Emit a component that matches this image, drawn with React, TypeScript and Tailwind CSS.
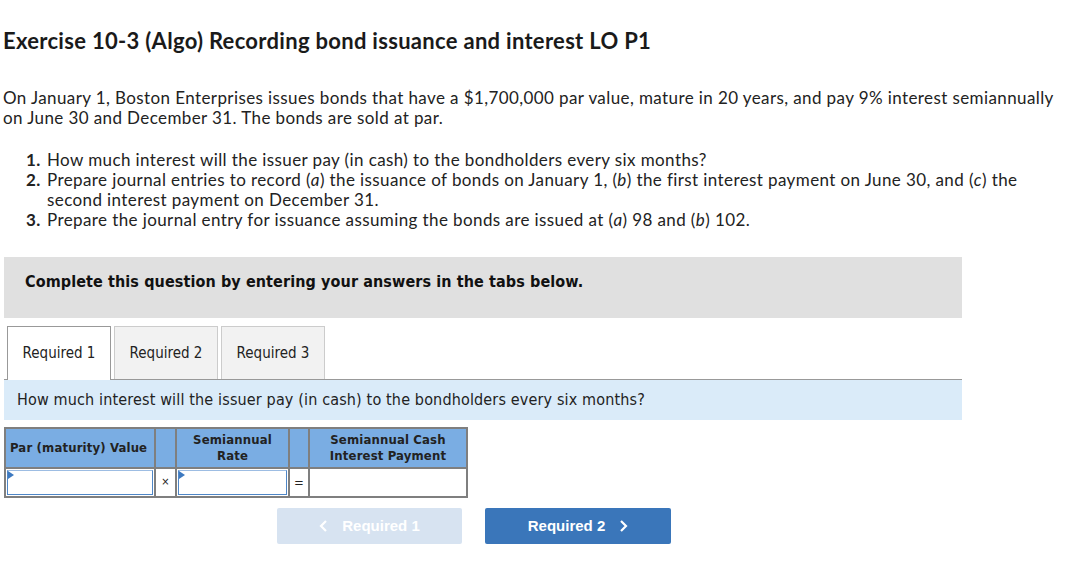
import React from 'react';

function Tab({ label, active }: { label: string; active?: boolean }) {
  return (
    <div
      className={
        active
          ? 'relative z-10 -mb-px flex h-[54px] w-[104px] items-center justify-center border border-b-0 border-[#999] bg-white'
          : 'flex h-[53px] w-[104px] items-center justify-center border border-b-0 border-[#ccc] bg-[#f2f2f2]'
      }
    >
      {label}
    </div>
  );
}

function InputCell({ className }: { className: string }) {
  return (
    <td className={`border-2 border-[#7f7f7f] p-0 ${className}`}>
      <div className="relative mx-px h-[25px] border border-[#4f86c6] border-t-[#9dbde3] bg-white">
        <span className="absolute left-0 top-0 h-0 w-0 border-y-[4px] border-l-[6px] border-y-transparent border-l-[#3d79c0]" />
      </div>
    </td>
  );
}

export default function App() {
  return (
    <div className="h-[576px] w-[1072px] overflow-hidden bg-white font-['Lato',sans-serif] text-[#222]">
      <h1 className="pl-[3px] pt-[28px] text-[22px] font-bold leading-[26px] tracking-[0.3px] text-[#1a1a1a]">
        Exercise 10-3 (Algo) Recording bond issuance and interest LO P1
      </h1>

      <p className="mt-[34px] pl-[3px] text-[17px] leading-[20px] tracking-[0.4px]">
        On January 1, Boston Enterprises issues bonds that have a $1,700,000 par value, mature in 20 years, and pay 9% interest semiannually
        on June 30 and December 31. The bonds are sold at par.
      </p>

      <ol className="mt-[22px] pl-[26px] text-[17px] leading-[20px] tracking-[0.4px]">
        <li className="flex">
          <span className="w-[21px] shrink-0 font-bold">1.</span>
          <span>How much interest will the issuer pay (in cash) to the bondholders every six months?</span>
        </li>
        <li className="flex">
          <span className="w-[21px] shrink-0 font-bold">2.</span>
          <span>
            Prepare journal entries to record (<i>a</i>) the issuance of bonds on January 1, (<i>b</i>) the first interest payment on June 30, and (<i>c</i>) the
            <br />
            second interest payment on December 31.
          </span>
        </li>
        <li className="flex">
          <span className="w-[21px] shrink-0 font-bold">3.</span>
          <span>
            Prepare the journal entry for issuance assuming the bonds are issued at (<i>a</i>) 98 and (<i>b</i>) 102.
          </span>
        </li>
      </ol>

      <div className="ml-[4px] mt-[27px] h-[61px] w-[958px] bg-[#e0e0e0] pl-[21px] pt-[15px] font-['DejaVu_Sans_Condensed','DejaVu_Sans',sans-serif] text-[16px] font-bold leading-[20px] tracking-[0.1px] text-[#111]">
        Complete this question by entering your answers in the tabs below.
      </div>

      <div className="ml-[7px] mt-[8px] flex gap-[3px] font-['DejaVu_Sans_Condensed','DejaVu_Sans',sans-serif] text-[15px] text-[#222]">
        <Tab label="Required 1" active />
        <Tab label="Required 2" />
        <Tab label="Required 3" />
      </div>

      <div className="ml-[4px] flex h-[41px] w-[958px] items-center border-t border-[#999] bg-[#daebf9] pl-[13px] font-['DejaVu_Sans_Condensed','DejaVu_Sans',sans-serif] text-[16px] tracking-[0.15px] text-[#222]">
        How much interest will the issuer pay (in cash) to the bondholders every six months?
      </div>

      <table className="ml-[4px] mt-[7px] border-collapse font-['DejaVu_Sans_Condensed','DejaVu_Sans',sans-serif] text-[13px] tracking-[0.15px] text-[#222]">
        <thead>
          <tr className="h-[40px] bg-[#7aade3] font-bold leading-[16px]">
            <th className="w-[150px] border-2 border-[#7f7f7f] px-1 text-left font-bold">Par (maturity) Value</th>
            <th className="w-[21px] border-2 border-[#7f7f7f]" />
            <th className="w-[113px] border-2 border-[#7f7f7f] font-bold">
              Semiannual
              <br />
              Rate
            </th>
            <th className="w-[20px] border-2 border-[#7f7f7f]" />
            <th className="w-[158px] border-2 border-[#7f7f7f] font-bold">
              Semiannual Cash
              <br />
              Interest Payment
            </th>
          </tr>
        </thead>
        <tbody>
          <tr className="h-[29px]">
            <InputCell className="w-[150px]" />
            <td className="border-2 border-[#7f7f7f] text-center text-[11px]">×</td>
            <InputCell className="w-[113px]" />
            <td className="border-2 border-[#7f7f7f] text-center">=</td>
            <td className="border-2 border-[#7f7f7f] bg-white" />
          </tr>
        </tbody>
      </table>

      <div className="ml-[277px] mt-[10px] flex gap-[23px] font-['Liberation_Sans',sans-serif] text-[15px] font-bold text-white">
        <button className="flex h-[36px] w-[185px] items-center justify-center gap-[14px] rounded-[2px] bg-[#d7e3f1]">
          <svg width="9" height="12" viewBox="0 0 9 12" fill="none" stroke="white" strokeWidth="2.2">
            <path d="M7 1 L2 6 L7 11" />
          </svg>
          <span>Required 1</span>
        </button>
        <button className="flex h-[36px] w-[186px] items-center justify-center gap-[14px] rounded-[2px] bg-[#3a76ba]">
          <span>Required 2</span>
          <svg width="9" height="12" viewBox="0 0 9 12" fill="none" stroke="white" strokeWidth="2.2">
            <path d="M2 1 L7 6 L2 11" />
          </svg>
        </button>
      </div>
    </div>
  );
}
